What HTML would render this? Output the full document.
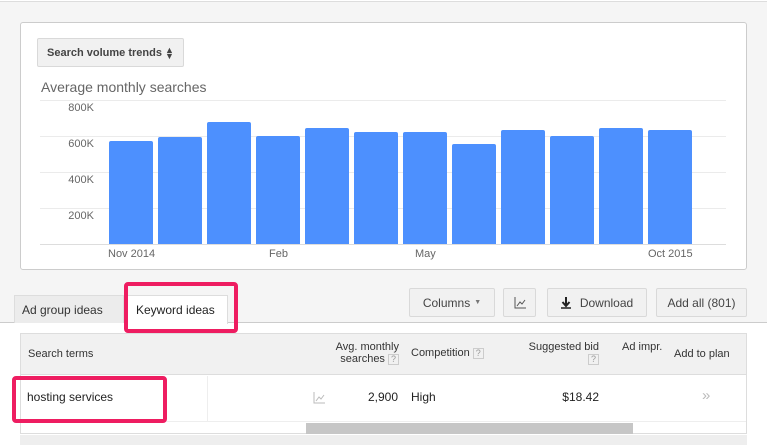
<!DOCTYPE html>
<html><head><style>
*{margin:0;padding:0;box-sizing:border-box}
body{width:767px;height:445px;overflow:hidden;background:#f5f5f5;font-family:"Liberation Sans",Arial,sans-serif;position:relative}
.a{position:absolute}
.btn{position:absolute;background:#f1f1f1;border:1px solid #d9d9d9;border-radius:2px;font-size:12px;color:#444;display:flex;align-items:center;justify-content:center}
.gl{position:absolute;left:40px;width:686px;height:1px;background:#ebebeb}
.yl{position:absolute;left:60px;width:34px;text-align:right;font-size:11px;color:#666}
.bar{position:absolute;width:44px;background:#4d90fe;bottom:201px;border-radius:2px 2px 0 0}
.xl{position:absolute;top:248px;font-size:11px;color:#666}
.th{position:absolute;font-size:11px;color:#333}
.q{display:inline-block;width:11px;height:11px;border:1px solid #ccc;font-size:9px;color:#999;line-height:9px;text-align:center;vertical-align:middle}
</style></head><body>
<div class="a" style="left:0;top:0;width:767px;height:2px;border-bottom:1px solid #ddd;background:#fff"></div>
<div class="a" style="left:20px;top:22px;width:727px;height:248px;background:#fff;border:1px solid #ccc;border-radius:3px"></div>
<div class="btn" style="left:37px;top:38px;width:147px;height:29px;font-size:11px;font-weight:bold">Search volume trends&nbsp;<span style="font-size:9px;line-height:6px;display:inline-block;text-align:center">▲<br>▼</span></div>
<div class="a" style="left:41px;top:79px;font-size:14px;color:#666">Average monthly searches</div>
<div class="gl" style="top:100px"></div><div class="gl" style="top:136px"></div><div class="gl" style="top:172px"></div><div class="gl" style="top:208px"></div><div class="gl" style="top:244px;background:#ddd"></div>
<div class="yl" style="top:102px">800K</div><div class="yl" style="top:138px">600K</div><div class="yl" style="top:174px">400K</div><div class="yl" style="top:210px">200K</div>
<div class="bar" style="left:109px;top:141px"></div>
<div class="bar" style="left:158px;top:137px"></div>
<div class="bar" style="left:207px;top:122px"></div>
<div class="bar" style="left:256px;top:136px"></div>
<div class="bar" style="left:305px;top:128px"></div>
<div class="bar" style="left:354px;top:132px"></div>
<div class="bar" style="left:403px;top:132px"></div>
<div class="bar" style="left:452px;top:144px"></div>
<div class="bar" style="left:501px;top:130px"></div>
<div class="bar" style="left:550px;top:136px"></div>
<div class="bar" style="left:599px;top:128px"></div>
<div class="bar" style="left:648px;top:130px"></div>
<div class="xl" style="left:108px">Nov 2014</div><div class="xl" style="left:269px">Feb</div><div class="xl" style="left:415px">May</div><div class="xl" style="left:648px">Oct 2015</div>
<div class="a" style="left:0;top:322px;width:767px;height:123px;background:#fff;border-top:1px solid #ccc"></div>
<div class="a" style="left:14px;top:295px;width:110px;height:28px;background:#ececec;border:1px solid #ddd;border-bottom:none;font-size:12px;color:#333;padding:7px 0 0 7px">Ad group ideas</div>
<div class="a" style="left:127px;top:295px;width:101px;height:29px;background:#fff;border:1px solid #ddd;border-bottom:none;font-size:12px;color:#222;padding:7px 0 0 8px">Keyword ideas</div>
<div class="a" style="left:124px;top:282px;width:114px;height:51px;border:4px solid #ee1d61;border-radius:4px"></div>
<div class="btn" style="left:409px;top:288px;width:86px;height:29px">Columns <span style="font-size:7px;margin-left:4px;color:#777">▼</span></div>
<div class="btn" style="left:503px;top:288px;width:33px;height:29px"><svg width="14" height="14"><path d="M2 1V12H13" stroke="#555" fill="none"/><path d="M4 10L7 6L9 8L12 4" stroke="#555" fill="none"/></svg></div>
<div class="btn" style="left:547px;top:288px;width:100px;height:29px"><svg width="10" height="12" style="margin-right:9px"><path d="M5 0V8M1.5 5L5 9L8.5 5" stroke="#222" stroke-width="2" fill="none"/><path d="M0 11H10" stroke="#222" stroke-width="1.5"/></svg>Download</div>
<div class="btn" style="left:656px;top:288px;width:91px;height:29px">Add all (801)</div>
<div class="a" style="left:20px;top:333px;width:727px;height:101px;border:1px solid #ddd;background:#fff"></div>
<div class="a" style="left:21px;top:334px;width:725px;height:41px;background:#f1f1f1;border-bottom:1px solid #ddd"></div>
<div class="th" style="left:28px;top:348px">Search terms</div>
<div class="th" style="left:308px;top:341px;text-align:right;width:91px;line-height:12px">Avg. monthly<br>searches <span class="q">?</span></div>
<div class="th" style="left:411px;top:347px">Competition <span class="q">?</span></div>
<div class="th" style="left:500px;top:341px;width:99px;text-align:right;line-height:12px">Suggested bid<br><span class="q">?</span></div>
<div class="th" style="left:622px;top:341px">Ad impr.</div>
<div class="th" style="left:674px;top:348px">Add to plan</div>
<div class="a" style="left:207px;top:376px;width:1px;height:45px;background:#eee"></div>
<div class="a" style="left:27px;top:390px;font-size:12px;color:#222">hosting services</div>
<div class="a" style="left:313px;top:391px"><svg width="12" height="12"><path d="M1 0V11H12" stroke="#bbb" fill="none"/><path d="M3 9L6 5L8 7L11 3" stroke="#bbb" fill="none"/></svg></div>
<div class="a" style="left:340px;top:390px;width:58px;text-align:right;font-size:12px;color:#222">2,900</div>
<div class="a" style="left:411px;top:390px;font-size:12px;color:#222">High</div>
<div class="a" style="left:500px;top:390px;width:99px;text-align:right;font-size:12px;color:#222">$18.42</div>
<div class="a" style="left:702px;top:387px;font-size:15px;color:#bbb">»</div>
<div class="a" style="left:21px;top:421px;width:725px;height:1px;background:#eee"></div>
<div class="a" style="left:306px;top:423px;width:327px;height:11px;background:#c6c6c6"></div>
<div class="a" style="left:20px;top:435px;width:727px;height:10px;background:#eee"></div>
<div class="a" style="left:12px;top:376px;width:155px;height:47px;border:4px solid #ee1d61;border-radius:4px"></div>
</body></html>
